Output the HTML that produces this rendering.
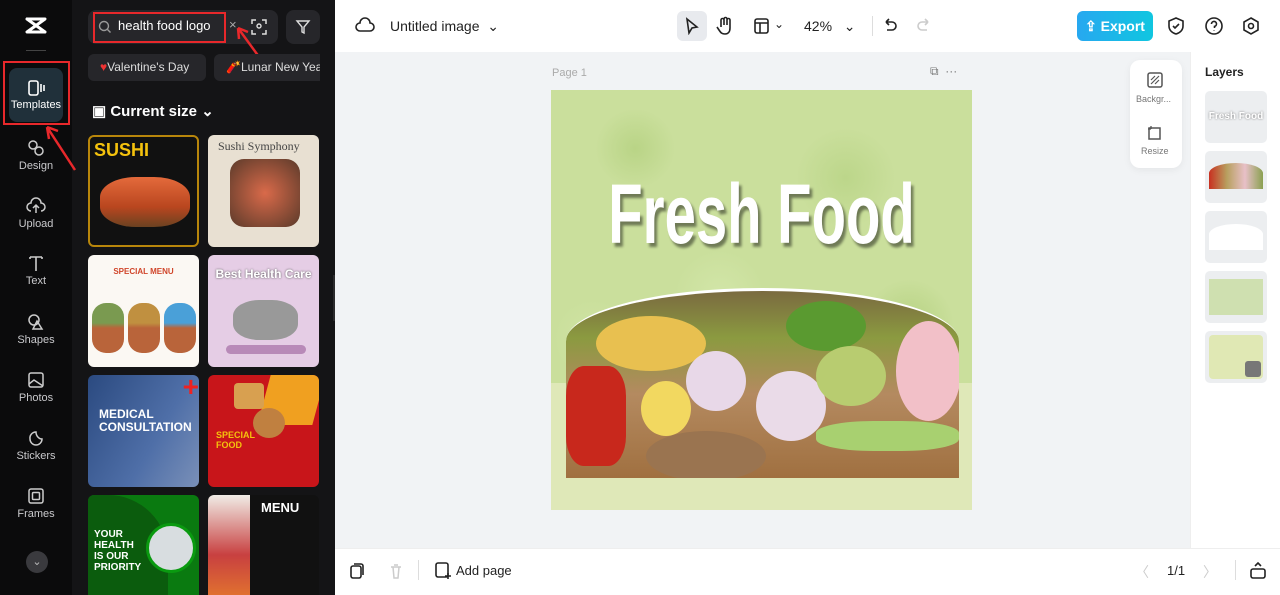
<!DOCTYPE html>
<html><head><meta charset="utf-8"><style>
*{margin:0;padding:0;box-sizing:border-box}
body{width:1280px;height:595px;overflow:hidden;font-family:"Liberation Sans",sans-serif;background:#fff;position:relative}
.abs{position:absolute}
.side{left:0;top:0;width:72px;height:595px;background:#0b0b0c}
.panel{left:72px;top:0;width:263px;height:595px;background:#141416}
.nav{position:absolute;left:0;width:72px;text-align:center;color:#c9c9cc;font-size:11px}
.nav svg{display:block;margin:0 auto 3px}
.tile{position:absolute;width:111px;height:112px;border-radius:6px;overflow:hidden}
.ic{stroke:#222;fill:none;stroke-width:1.6}
</style></head><body>
<div class="abs side"></div>
<div class="abs panel"></div>
<!-- logo -->
<div class="abs" style="left:24px;top:16px">
<svg width="24" height="20" viewBox="0 0 24 20"><path d="M3 3h18L3 16h18M3 3l18 13M21 3" stroke="#fff" stroke-width="3" fill="none" stroke-linejoin="round" stroke-linecap="round"/></svg></div>
<div class="abs" style="left:26px;top:50px;width:20px;height:1px;background:#444"></div>
<div class="abs" style="left:9px;top:68px;width:54px;height:54px;border-radius:8px;background:#20303a"></div>
<div class="abs" style="left:3px;top:61px;width:67px;height:64px;border:2px solid #e8282b"></div>
<div class="nav" style="top:80px;color:#fff"><svg width="20" height="16" viewBox="0 0 20 16"><rect x="3" y="1" width="9" height="14" rx="2" stroke="#fff" stroke-width="1.6" fill="none"/><path d="M15 4v8M18 5v6" stroke="#fff" stroke-width="1.6"/></svg>Templates</div>
<div class="nav" style="top:139px"><svg width="20" height="18" viewBox="0 0 20 18"><circle cx="7" cy="6" r="4" stroke="#ccc" stroke-width="1.5" fill="none"/><circle cx="13" cy="12" r="4" stroke="#ccc" stroke-width="1.5" fill="none"/></svg>Design</div>
<div class="nav" style="top:197px"><svg width="20" height="18" viewBox="0 0 20 18"><path d="M5 14a4 4 0 0 1 0-8 5 5 0 0 1 10 0 4 4 0 0 1 0 8M10 16V8M7 11l3-3 3 3" stroke="#ccc" stroke-width="1.5" fill="none"/></svg>Upload</div>
<div class="nav" style="top:254px"><svg width="20" height="18" viewBox="0 0 20 18"><path d="M4 3h12M10 3v14M4 3v2M16 3v2" stroke="#ccc" stroke-width="1.6" fill="none"/></svg>Text</div>
<div class="nav" style="top:313px"><svg width="20" height="18" viewBox="0 0 20 18"><circle cx="8" cy="7" r="5" stroke="#ccc" stroke-width="1.5" fill="none"/><path d="M11 8l5 8H7z" stroke="#ccc" stroke-width="1.5" fill="none"/></svg>Shapes</div>
<div class="nav" style="top:371px"><svg width="20" height="18" viewBox="0 0 20 18"><rect x="3" y="2" width="14" height="14" rx="2" stroke="#ccc" stroke-width="1.5" fill="none"/><path d="M3 13l5-4 9 6" stroke="#ccc" stroke-width="1.5" fill="none"/></svg>Photos</div>
<div class="nav" style="top:429px"><svg width="20" height="18" viewBox="0 0 20 18"><path d="M4 10a6 6 0 1 0 12 0c-3 0-6-3-6-7a6 6 0 0 0-6 7z" stroke="#ccc" stroke-width="1.5" fill="none"/></svg>Stickers</div>
<div class="nav" style="top:487px"><svg width="20" height="18" viewBox="0 0 20 18"><rect x="3" y="2" width="14" height="14" rx="2" stroke="#ccc" stroke-width="1.5" fill="none"/><rect x="6.5" y="5.5" width="7" height="7" rx="1" stroke="#ccc" stroke-width="1.5" fill="none"/></svg>Frames</div>
<div class="abs" style="left:26px;top:551px;width:22px;height:22px;border-radius:50%;background:#3a3a3e;color:#bbb;font-size:11px;text-align:center;line-height:22px">⌄</div>
<svg class="abs" style="left:35px;top:115px" width="45" height="60"><path d="M40 55L12 12M12 12l2 12M12 12l11 4" stroke="#e8282b" stroke-width="2.5" fill="none"/></svg>
<!-- search -->
<div class="abs" style="left:88px;top:10px;width:190px;height:34px;border-radius:8px;background:#26262a"></div>
<div class="abs" style="left:93px;top:12px;width:133px;height:31px;border:2px solid #e8282b"></div>
<svg class="abs" style="left:98px;top:20px" width="14" height="14"><circle cx="6" cy="6" r="4.5" stroke="#999" stroke-width="1.4" fill="none"/><path d="M9.5 9.5l3 3" stroke="#999" stroke-width="1.4"/></svg>
<div class="abs" style="left:118px;top:18px;color:#fff;font-size:13px">health food logo</div>
<div class="abs" style="left:229px;top:17px;color:#aaa;font-size:13px">×</div>
<svg class="abs" style="left:250px;top:18px" width="18" height="18"><path d="M2 6V2h4M12 2h4v4M16 12v4h-4M6 16H2v-4" stroke="#ddd" stroke-width="1.5" fill="none"/><circle cx="9" cy="8" r="2" stroke="#ddd" stroke-width="1.4" fill="none"/></svg>
<div class="abs" style="left:286px;top:10px;width:34px;height:34px;border-radius:8px;background:#26262a"></div>
<svg class="abs" style="left:295px;top:19px" width="16" height="16"><path d="M2 2h12l-5 6v6l-2-1V8z" stroke="#ddd" stroke-width="1.4" fill="none"/></svg>
<svg class="abs" style="left:228px;top:20px" width="50" height="60"><path d="M45 56L10 8M10 8l1 11M10 8l10 4" stroke="#e8282b" stroke-width="2.5" fill="none"/></svg>
<div class="abs" style="left:88px;top:54px;width:118px;height:27px;border-radius:6px;background:#26262a;color:#ddd;font-size:12px;line-height:27px;padding-left:12px"><span style="color:#e33">♥</span>Valentine's Day</div>
<div class="abs" style="left:214px;top:54px;width:106px;height:27px;border-radius:6px 0 0 6px;background:#26262a;color:#ddd;font-size:12px;line-height:27px;padding-left:12px;overflow:hidden;white-space:nowrap"><span style="color:#e33">🧨</span>Lunar New Year</div>
<div class="abs" style="left:92px;top:102px;color:#fff;font-size:15px;font-weight:bold">▣ Current size ⌄</div>
<!-- tiles -->
<div class="tile" style="left:88px;top:135px;background:#111;border:2px solid #b8860b"><div style="color:#f4c20d;font-weight:bold;font-size:18px;padding:3px 4px">SUSHI</div><div style="position:absolute;left:10px;top:40px;width:90px;height:50px;border-radius:40%;background:linear-gradient(#e46a3b,#b9461f 60%,#6b4221)"></div></div>
<div class="tile" style="left:208px;top:135px;background:#e8e0d2"><div style="font-family:'Liberation Serif',serif;color:#444;font-size:12px;padding:4px 10px">Sushi Symphony</div><div style="position:absolute;left:22px;top:24px;width:70px;height:68px;border-radius:14px;background:radial-gradient(#d96a4a,#5a3a2a)"></div></div>
<div class="tile" style="left:88px;top:255px;background:#fbf8f3"><div style="color:#d0452a;font-size:8px;font-weight:bold;text-align:center;padding-top:12px">SPECIAL MENU</div><div style="position:absolute;left:4px;top:48px;width:32px;height:50px;border-radius:14px;background:linear-gradient(#7a9a50 40%,#b9643a 50%)"></div><div style="position:absolute;left:40px;top:48px;width:32px;height:50px;border-radius:14px;background:linear-gradient(#c09040 40%,#b9643a 50%)"></div><div style="position:absolute;left:76px;top:48px;width:32px;height:50px;border-radius:14px;background:linear-gradient(#4aa0d8 40%,#b9643a 50%)"></div></div>
<div class="tile" style="left:208px;top:255px;background:#e5cde5"><div style="color:#fff;font-size:12px;font-weight:bold;text-align:center;padding-top:12px;text-shadow:0 0 2px #555">Best Health Care</div><div style="position:absolute;left:25px;top:45px;width:65px;height:40px;border-radius:40%;background:#999"></div><div style="position:absolute;left:18px;top:90px;width:80px;height:9px;border-radius:5px;background:#b88ab8"></div></div>
<div class="tile" style="left:88px;top:375px;background:linear-gradient(120deg,#2b4a80,#4f6fa8 60%,#7a90b8)"><div style="color:#fff;font-weight:bold;font-size:12px;padding:33px 0 0 11px;line-height:13px">MEDICAL<br>CONSULTATION</div><div style="position:absolute;right:0;top:0;color:#e22;font-size:28px;font-weight:bold;line-height:24px">+</div></div>
<div class="tile" style="left:208px;top:375px;background:#c8151a"><div style="position:absolute;right:0;top:0;width:55px;height:50px;background:#f0a020;transform:skewX(-15deg)"></div><div style="position:absolute;left:26px;top:8px;width:30px;height:26px;background:#d8a050;border-radius:4px"></div><div style="position:absolute;left:45px;top:33px;width:32px;height:30px;background:#c08040;border-radius:50%"></div><div style="color:#f4c20d;font-weight:bold;font-size:9px;position:absolute;left:8px;top:55px">SPECIAL<br>FOOD</div></div>
<div class="tile" style="left:88px;top:495px;background:#0a7a10;height:100px;border-radius:6px 6px 0 0"><div style="position:absolute;left:0;top:0;width:80px;height:100px;background:#0b5c0d;border-radius:0 60px 0 0"></div><div style="position:absolute;left:58px;top:28px;width:50px;height:50px;border-radius:50%;background:#d8dde0;border:3px solid #0a9a10"></div><div style="color:#fff;font-weight:bold;font-size:10px;position:absolute;left:6px;top:34px;line-height:11px">YOUR<br>HEALTH<br>IS OUR<br>PRIORITY</div></div>
<div class="tile" style="left:208px;top:495px;background:#111;height:100px;border-radius:6px 6px 0 0"><div style="position:absolute;left:0;top:0;width:42px;height:100px;background:linear-gradient(#f0ece6,#c84040 60%,#e07030)"></div><div style="color:#fff;font-weight:bold;font-size:13px;position:absolute;left:53px;top:5px">MENU</div></div>
<div class="abs" style="left:333px;top:275px;width:8px;height:46px;background:#2a2a2c;border-radius:0 4px 4px 0"></div>
<!-- topbar -->
<div class="abs" style="left:335px;top:0;width:945px;height:52px;background:#fff"></div>
<svg class="abs" style="left:355px;top:17px" width="20" height="18"><path d="M5 14a4 4 0 0 1 0-8 5 5 0 0 1 10 0 4 4 0 0 1 0 8z" stroke="#222" stroke-width="1.6" fill="none"/></svg>
<div class="abs" style="left:390px;top:18px;font-size:14px;color:#222">Untitled image &nbsp;⌄</div>
<div class="abs" style="left:677px;top:11px;width:30px;height:30px;border-radius:6px;background:#e8eaee"></div>
<svg class="abs" style="left:684px;top:17px" width="16" height="18"><path d="M3 2l10 8-5 1-3 5z" class="ic"/></svg>
<svg class="abs" style="left:716px;top:16px" width="18" height="20"><path d="M5 11V4a1.5 1.5 0 0 1 3 0v5V3a1.5 1.5 0 0 1 3 0v6V4a1.5 1.5 0 0 1 3 0v8c0 4-2 6-5 6s-4-1-6-4l-2-3" class="ic"/></svg>
<svg class="abs" style="left:753px;top:17px" width="18" height="18"><rect x="2" y="2" width="13" height="14" rx="2" class="ic"/><path d="M2 6h13M7 6v10" class="ic"/></svg>
<div class="abs" style="left:774px;top:17px;font-size:12px;color:#222">⌄</div>
<div class="abs" style="left:804px;top:18px;font-size:14px;color:#222">42% &nbsp;&nbsp;⌄</div>
<div class="abs" style="left:872px;top:16px;width:1px;height:20px;background:#ddd"></div>
<svg class="abs" style="left:882px;top:17px" width="16" height="18"><path d="M4 5h6a4 4 0 0 1 0 8H5M4 5l3-3M4 5l3 3" class="ic"/></svg>
<svg class="abs" style="left:916px;top:17px" width="16" height="18"><path d="M12 5H6a4 4 0 0 0 0 8h5M12 5L9 2M12 5L9 8" stroke="#ccc" stroke-width="1.6" fill="none"/></svg>
<div class="abs" style="left:1077px;top:11px;width:76px;height:30px;border-radius:6px;background:linear-gradient(90deg,#27a8f0,#10c6e0);color:#fff;font-size:14px;font-weight:bold;line-height:30px;text-align:center">⇪ Export</div>
<svg class="abs" style="left:1167px;top:16px" width="18" height="20"><path d="M9 2l7 3v5c0 4-3 7-7 8-4-1-7-4-7-8V5z M6 10l2 2 4-4" class="ic"/></svg>
<svg class="abs" style="left:1204px;top:16px" width="20" height="20"><circle cx="10" cy="10" r="8" class="ic"/><path d="M7.5 8a2.5 2.5 0 1 1 3 2.4V12M10 14.5v.5" class="ic"/></svg>
<svg class="abs" style="left:1241px;top:16px" width="20" height="20"><path d="M10 2l7 4v8l-7 4-7-4V6z" class="ic"/><circle cx="10" cy="10" r="2.5" class="ic"/></svg>
<!-- canvas area -->
<div class="abs" style="left:335px;top:52px;width:855px;height:496px;background:#f1f3f5"></div>
<div class="abs" style="left:552px;top:67px;font-size:11px;color:#aaa">Page 1</div>
<div class="abs" style="left:930px;top:64px;font-size:12px;color:#777">⧉ &nbsp;···</div>
<div class="abs" style="left:551px;top:90px;width:421px;height:420px;background:#dfe8b8;overflow:hidden">
 <div style="position:absolute;left:0;top:0;width:421px;height:293px;background:#cadf9c;background-image:radial-gradient(circle at 20% 20%,#b9d486 0,transparent 40px),radial-gradient(circle at 70% 30%,#bcd68a 0,transparent 50px),radial-gradient(circle at 40% 70%,#d2e6a8 0,transparent 45px),radial-gradient(circle at 85% 80%,#b6d282 0,transparent 45px),radial-gradient(circle at 10% 85%,#d0e4a4 0,transparent 40px)"></div>
 <div style="position:absolute;left:-100px;top:82px;width:621px;text-align:center;font-weight:bold;font-size:84px;line-height:84px;color:#fff;transform:scaleX(0.67);text-shadow:4px 4px 3px rgba(0,0,0,.45);white-space:nowrap">Fresh Food</div>
 <div style="position:absolute;left:15px;top:198px;width:393px;height:190px;border-radius:50% 50% 0 0/28% 28% 0 0;border-top:3px solid #fff;overflow:hidden;background:linear-gradient(180deg,#7a6a40 0,#8b9a40 25%,#b48a60 55%,#a07040 100%)">
  <div style="position:absolute;left:0;top:75px;width:60px;height:100px;background:#c8281c;border-radius:30%"></div>
  <div style="position:absolute;left:30px;top:25px;width:110px;height:55px;background:#e8c050;border-radius:50%"></div>
  <div style="position:absolute;left:75px;top:90px;width:50px;height:55px;background:#f2d860;border-radius:50%"></div>
  <div style="position:absolute;left:120px;top:60px;width:60px;height:60px;background:#e8d8e8;border-radius:50%"></div>
  <div style="position:absolute;left:190px;top:80px;width:70px;height:70px;background:#eadbe8;border-radius:50%"></div>
  <div style="position:absolute;left:220px;top:10px;width:80px;height:50px;background:#5a9a30;border-radius:50%"></div>
  <div style="position:absolute;left:250px;top:55px;width:70px;height:60px;background:#b8cc70;border-radius:50%"></div>
  <div style="position:absolute;left:330px;top:30px;width:65px;height:100px;background:#f2c0c8;border-radius:50%"></div>
  <div style="position:absolute;left:250px;top:130px;width:143px;height:30px;background:#a8d070;border-radius:40%"></div>
  <div style="position:absolute;left:80px;top:140px;width:120px;height:50px;background:#9a7450;border-radius:50%"></div>
 </div>
</div>
<div class="abs" style="left:1130px;top:60px;width:52px;height:108px;border-radius:10px;background:#fff;box-shadow:0 2px 8px rgba(0,0,0,.06)"></div>
<svg class="abs" style="left:1147px;top:72px" width="16" height="16"><rect x="1" y="1" width="14" height="14" rx="2" stroke="#555" stroke-width="1.5" fill="none"/><path d="M4 12l8-8M4 8l4-4M8 12l4-4" stroke="#555" stroke-width="1.2"/></svg>
<div class="abs" style="left:1136px;top:94px;font-size:9px;color:#777">Backgr...</div>
<svg class="abs" style="left:1147px;top:125px" width="16" height="16"><rect x="2" y="3" width="11" height="11" stroke="#555" stroke-width="1.5" fill="none"/><path d="M4 1v3M1 4h3" stroke="#555" stroke-width="1.3"/></svg>
<div class="abs" style="left:1141px;top:146px;font-size:9px;color:#777">Resize</div>
<!-- layers -->
<div class="abs" style="left:1190px;top:52px;width:90px;height:496px;background:#fff;border-left:1px solid #eee"></div>
<div class="abs" style="left:1205px;top:65px;font-size:12px;font-weight:bold;color:#222">Layers</div>
<div class="abs" style="left:1205px;top:91px;width:62px;height:52px;border-radius:5px;background:#eceef0;color:#fff;font-size:10px;font-weight:bold;text-align:center;line-height:52px;text-shadow:0 0 2px #777">Fresh Food</div>
<div class="abs" style="left:1205px;top:151px;width:62px;height:52px;border-radius:5px;background:#eceef0"><div style="margin:12px 4px;height:26px;border-radius:50% 50% 0 0/40% 40% 0 0;background:linear-gradient(90deg,#c83020,#b8a060,#e8c0c8,#8aa050)"></div></div>
<div class="abs" style="left:1205px;top:211px;width:62px;height:52px;border-radius:5px;background:#eceef0"><div style="margin:13px 4px;height:26px;border-radius:50% 50% 0 0/40% 40% 0 0;background:#fff"></div></div>
<div class="abs" style="left:1205px;top:271px;width:62px;height:52px;border-radius:5px;background:#eceef0"><div style="margin:8px 4px;height:36px;background:#cfe0b0"></div></div>
<div class="abs" style="left:1205px;top:331px;width:62px;height:52px;border-radius:5px;background:#eceef0"><div style="margin:4px;height:44px;border-radius:4px;background:#e0e8b4"></div><div style="position:absolute;right:6px;bottom:6px;width:16px;height:16px;border-radius:3px;background:#777"></div></div>
<!-- bottom bar -->
<div class="abs" style="left:335px;top:548px;width:945px;height:47px;background:#fff;border-top:1px solid #eee"></div>
<svg class="abs" style="left:349px;top:562px" width="16" height="18"><rect x="2" y="4" width="10" height="12" rx="2" class="ic"/><path d="M5 2h7a2 2 0 0 1 2 2v9" class="ic"/></svg>
<svg class="abs" style="left:388px;top:562px" width="16" height="18"><path d="M3 5h10M5 5l1 11h4l1-11M6 3h4" stroke="#ccc" stroke-width="1.5" fill="none"/></svg>
<div class="abs" style="left:418px;top:560px;width:1px;height:20px;background:#ddd"></div>
<svg class="abs" style="left:434px;top:561px" width="18" height="18"><rect x="2" y="2" width="12" height="14" rx="2" class="ic"/><path d="M14 12v6M11 15h6" class="ic"/></svg>
<div class="abs" style="left:456px;top:563px;font-size:13px;color:#222">Add page</div>
<div class="abs" style="left:1135px;top:562px;font-size:14px;color:#ccc">〈</div>
<div class="abs" style="left:1167px;top:563px;font-size:13px;color:#222">1/1</div>
<div class="abs" style="left:1203px;top:562px;font-size:14px;color:#ccc">〉</div>
<div class="abs" style="left:1235px;top:560px;width:1px;height:20px;background:#ddd"></div>
<svg class="abs" style="left:1249px;top:561px" width="18" height="18"><rect x="2" y="8" width="14" height="9" rx="2" class="ic"/><path d="M6 5l3-3 3 3" class="ic"/></svg>
</body></html>
